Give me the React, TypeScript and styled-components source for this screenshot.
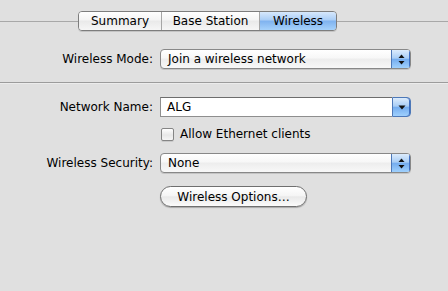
import React from "react";
import styled, { createGlobalStyle } from "styled-components";

const Global = createGlobalStyle`
  html, body { margin: 0; padding: 0; background: #e0e0e0; }
  body { font-family: "DejaVu Sans", "Lucida Grande", sans-serif; font-size: 12px; color: #000; }
  #root { height: 291px; }
`;

const Window = styled.div`
  height: 291px;
  background: #e0e0e0;
  display: flex;
  flex-direction: column;
`;

const TabBar = styled.div`
  display: flex;
  align-items: center;
  padding-top: 11px;
`;

const TabLine = styled.div<{ $w?: number }>`
  ${(p) => (p.$w ? `width: ${p.$w}px;` : "flex: 1;")}
  height: 1px;
  background: #a8a8a8;
`;

const Segmented = styled.div`
  display: flex;
  height: 18px;
  border: 1px solid #7d7d7d;
  border-radius: 4px;
  overflow: hidden;
  box-shadow: 0 1px 0 rgba(0, 0, 0, 0.12);
`;

const Segment = styled.div<{ $active?: boolean; $w: number }>`
  width: ${(p) => p.$w}px;
  display: flex;
  align-items: center;
  justify-content: center;
  font-size: 12px;
  border-left: 1px solid #a6a6a6;
  &:first-child { border-left: none; }
  background: ${(p) =>
    p.$active
      ? "linear-gradient(#d7e8fc 0%, #a9cdf6 45%, #7fb2ef 50%, #a6d2fb 100%)"
      : "linear-gradient(#ffffff 0%, #f4f4f4 45%, #e9e9e9 50%, #f6f6f6 100%)"};
`;

const Section = styled.div<{ $top: number }>`
  display: grid;
  grid-template-columns: 153px 251px;
  column-gap: 7px;
  align-items: center;
  padding-top: ${(p) => p.$top}px;
`;

const Label = styled.div`
  text-align: right;
  white-space: nowrap;
`;

const Divider = styled.div`
  margin-top: 13px;
  height: 1px;
  background: #9c9c9c;
  box-shadow: 0 1px 0 #ececec;
`;

const Popup = styled.div`
  height: 18px;
  display: flex;
  border: 1px solid #888;
  border-radius: 4px;
  overflow: hidden;
  box-shadow: 0 1px 0 rgba(0, 0, 0, 0.12);
  background: linear-gradient(#ffffff 0%, #f7f7f7 45%, #ededed 50%, #f8f8f8 100%);
`;

const PopupText = styled.div`
  flex: 1;
  padding-left: 7px;
  display: flex;
  align-items: center;
  white-space: nowrap;
`;

const Combo = styled.div`
  height: 20px;
  display: flex;
`;

const ComboField = styled.div`
  flex: 1;
  background: #fff;
  border: 1px solid #8e8e8e;
  border-top-color: #6d6d6d;
  border-right: none;
  display: flex;
  align-items: center;
  padding-left: 6px;
`;

const ArrowBtn = styled.div<{ $combo?: boolean }>`
  width: ${(p) => (p.$combo ? 17 : 18)}px;
  display: flex;
  align-items: center;
  justify-content: center;
  border-left: 1px solid #4d78b8;
  ${(p) => (p.$combo ? "border: 1px solid #4d78b8; border-radius: 0 4px 4px 0;" : "")}
  box-shadow: inset -1px 0 0 #3f6fc0;
  background: linear-gradient(#dcebfc 0%, #a9cef6 45%, #75adef 52%, #9fd0fd 100%);
`;

const CheckRow = styled.div`
  grid-column: 2;
  display: flex;
  align-items: center;
  gap: 6px;
  margin-top: 10px;
  padding-left: 1px;
`;

const Checkbox = styled.div`
  width: 11px;
  height: 11px;
  border: 1px solid #858585;
  border-radius: 2px;
  background: linear-gradient(#ffffff, #e8e8e8 55%, #f6f6f6);
  box-shadow: 0 1px 0 rgba(0, 0, 0, 0.1);
`;

const PillButton = styled.div`
  grid-column: 2;
  justify-self: start;
  width: 145px;
  height: 19px;
  border: 1px solid #6f6f6f;
  border-radius: 11px;
  display: flex;
  align-items: center;
  justify-content: center;
  background: linear-gradient(#ffffff 0%, #f5f5f5 45%, #e9e9e9 52%, #fbfbfb 100%);
  box-shadow: 0 1px 1px rgba(0, 0, 0, 0.25);
  margin-top: 13px;
`;

const UpDown = () => (
  <svg width="7" height="11" viewBox="0 0 7 11">
    <path d="M3.5 0.5 L6.5 4 L0.5 4 Z" fill="#111" />
    <path d="M3.5 10.5 L6.5 7 L0.5 7 Z" fill="#111" />
  </svg>
);

const Down = () => (
  <svg width="8" height="5" viewBox="0 0 8 5">
    <path d="M0.5 0.5 L7.5 0.5 L4 4.5 Z" fill="#111" />
  </svg>
);

export default function App() {
  return (
    <Window>
      <Global />
      <TabBar>
        <TabLine $w={78} />
        <Segmented>
          <Segment $w={82}>Summary</Segment>
          <Segment $w={97}>Base Station</Segment>
          <Segment $w={76} $active>
            Wireless
          </Segment>
        </Segmented>
        <TabLine />
      </TabBar>
      <Section $top={18}>
        <Label>Wireless Mode:</Label>
        <Popup>
          <PopupText>Join a wireless network</PopupText>
          <ArrowBtn>
            <UpDown />
          </ArrowBtn>
        </Popup>
      </Section>
      <Divider />
      <Section $top={14}>
        <Label>Network Name:</Label>
        <Combo>
          <ComboField>ALG</ComboField>
          <ArrowBtn $combo>
            <Down />
          </ArrowBtn>
        </Combo>
        <CheckRow>
          <Checkbox />
          <span>Allow Ethernet clients</span>
        </CheckRow>
      </Section>
      <Section $top={12}>
        <Label>Wireless Security:</Label>
        <Popup>
          <PopupText>None</PopupText>
          <ArrowBtn>
            <UpDown />
          </ArrowBtn>
        </Popup>
        <PillButton>Wireless Options…</PillButton>
      </Section>
    </Window>
  );
}
